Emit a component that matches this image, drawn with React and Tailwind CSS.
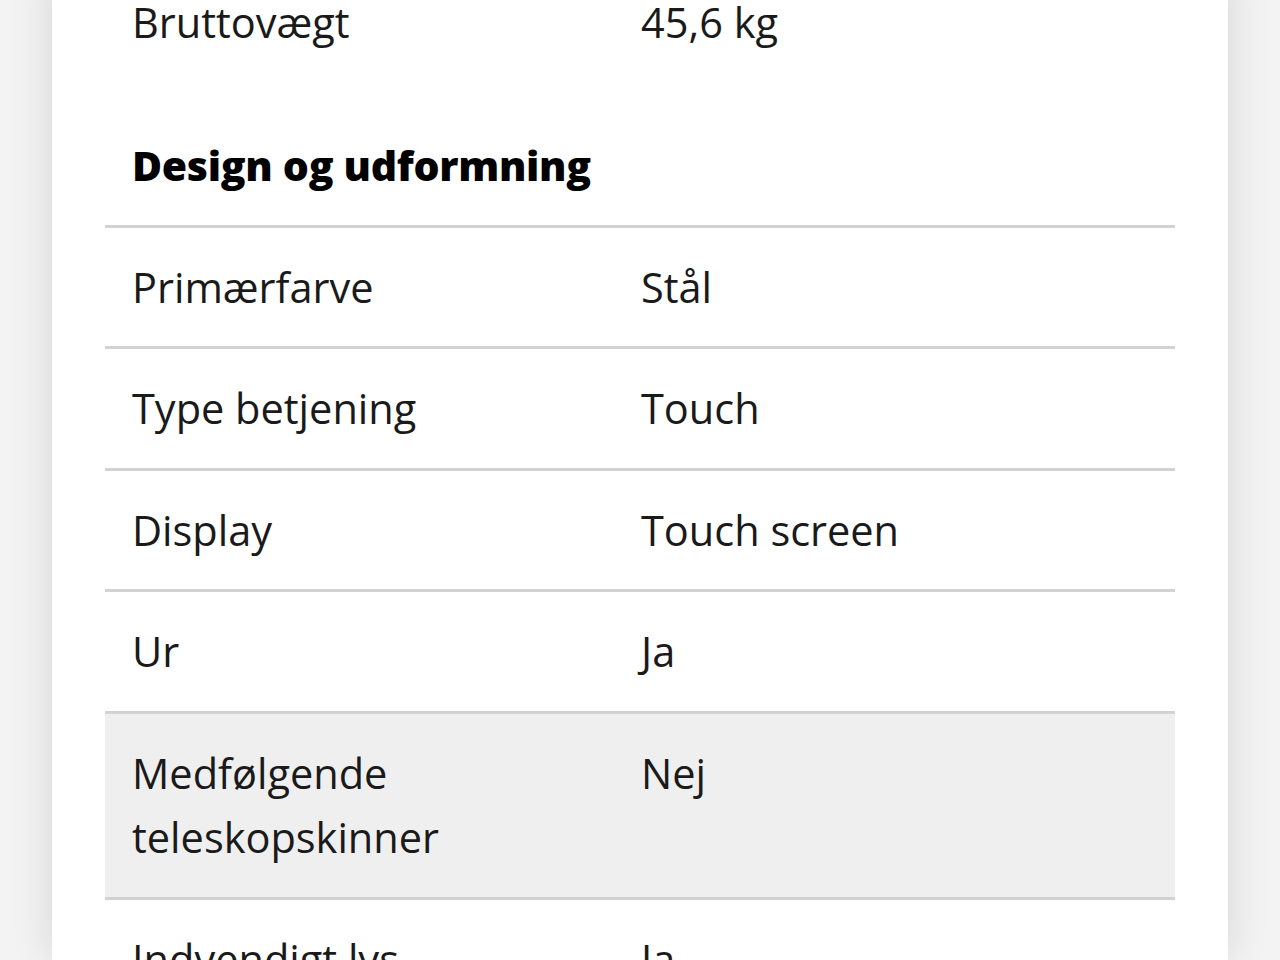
const rows = [
  { label: 'Primærfarve', value: 'Stål' },
  { label: 'Type betjening', value: 'Touch' },
  { label: 'Display', value: 'Touch screen' },
  { label: 'Ur', value: 'Ja' },
  { label: 'Medfølgende teleskopskinner', value: 'Nej', active: true },
  { label: 'Indvendigt lys', value: 'Ja' },
]

function Row({ label, value, active, border = true }) {
  return (
    <div className={`grid grid-cols-[509px_1fr] px-[27px] py-[27px] text-[41.5px] leading-[64.5px] text-[#1a1a1a] ${border ? 'border-t-[3px] border-[#d2d2d2]' : ''} ${active ? 'bg-[#efefef]' : ''}`}>
      <div className="pr-8 max-w-[360px]">{label}</div>
      <div>{value}</div>
    </div>
  )
}

export default function App() {
  return (
    <div
      className="h-[960px] overflow-hidden bg-[#f3f3f3] flex justify-center"
      style={{ fontFamily: '"Open Sans", Lato, sans-serif' }}
    >
      <div className="w-[1176px] bg-white shadow-[0_0_40px_rgba(0,0,0,0.12)] px-[53px] -mt-[37px]">
        <Row label="Bruttovægt" value="45,6 kg" border={false} />
        <h2 className="px-[27px] pt-[53px] pb-[30px] text-[41px] leading-[60px] font-extrabold tracking-[-0.3px] text-black">
          Design og udformning
        </h2>
        {rows.map((r) => (
          <Row key={r.label} {...r} />
        ))}
      </div>
    </div>
  )
}
